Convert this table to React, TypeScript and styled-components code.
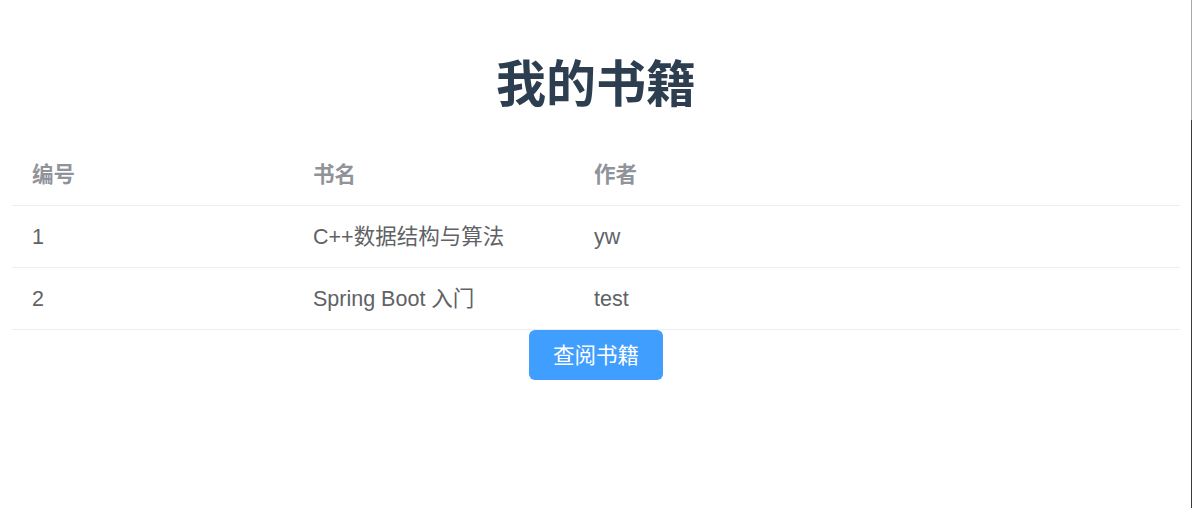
import React from "react";
import styled, { createGlobalStyle } from "styled-components";

const GlobalStyle = createGlobalStyle`
  html, body {
    margin: 0;
    padding: 0;
    background: #ffffff;
  }
  body {
    font-family: "Liberation Sans", Arial, "Noto Sans CJK SC", sans-serif;
  }
`;

const Page = styled.div`
  display: flex;
  height: 100vh;
  overflow: hidden;
`;

const Main = styled.main`
  flex: 1;
  padding: 0 11px 0 12px;
  display: flex;
  flex-direction: column;
`;

const Edge = styled.div`
  width: 1px;
  display: flex;
  flex-direction: column;
`;

const EdgePart = styled.div<{ $dark?: boolean }>`
  flex: ${(p) => (p.$dark ? "1" : "0 0 120px")};
  background: ${(p) => (p.$dark ? "#3a3a3a" : "#a8a8a8")};
`;

const Title = styled.h1`
  margin: 50px 0 34px;
  text-align: center;
  font-family: "Noto Sans CJK SC", sans-serif;
  font-weight: 700;
  font-size: 50px;
  line-height: 60px;
  color: #2c3e50;
`;

const Table = styled.div`
  display: flex;
  flex-direction: column;
`;

const Row = styled.div`
  display: grid;
  grid-template-columns: 281px 281px 1fr;
  height: 61px;
  border-bottom: 1px solid #ebeef5;
  align-items: center;
`;

const Cell = styled.div<{ $head?: boolean }>`
  padding-left: 20px;
  font-family: "Liberation Sans", Arial, "Noto Sans CJK SC", sans-serif;
  font-size: 21.5px;
  line-height: 30px;
  height: 30px;
  font-weight: ${(p) => (p.$head ? 700 : 400)};
  color: ${(p) => (p.$head ? "#909399" : "#606266")};
  white-space: nowrap;
`;

const Actions = styled.div`
  display: flex;
  justify-content: center;
`;

const Button = styled.button`
  height: 50px;
  padding: 0 24px 3px;
  border: none;
  border-radius: 6px;
  background: #409eff;
  color: #ffffff;
  font-family: "Noto Sans CJK SC", sans-serif;
  font-size: 21.5px;
  line-height: 30px;
  cursor: pointer;
`;

const books = [
  { id: 1, name: "C++数据结构与算法", author: "yw" },
  { id: 2, name: "Spring Boot 入门", author: "test" },
];

export default function App() {
  return (
    <Page>
      <GlobalStyle />
      <Main>
        <Title>我的书籍</Title>
        <Table>
          <Row>
            <Cell $head>编号</Cell>
            <Cell $head>书名</Cell>
            <Cell $head>作者</Cell>
          </Row>
          {books.map((b) => (
            <Row key={b.id}>
              <Cell>{b.id}</Cell>
              <Cell>{b.name}</Cell>
              <Cell>{b.author}</Cell>
            </Row>
          ))}
        </Table>
        <Actions>
          <Button>查阅书籍</Button>
        </Actions>
      </Main>
      <Edge>
        <EdgePart />
        <EdgePart $dark />
      </Edge>
    </Page>
  );
}
